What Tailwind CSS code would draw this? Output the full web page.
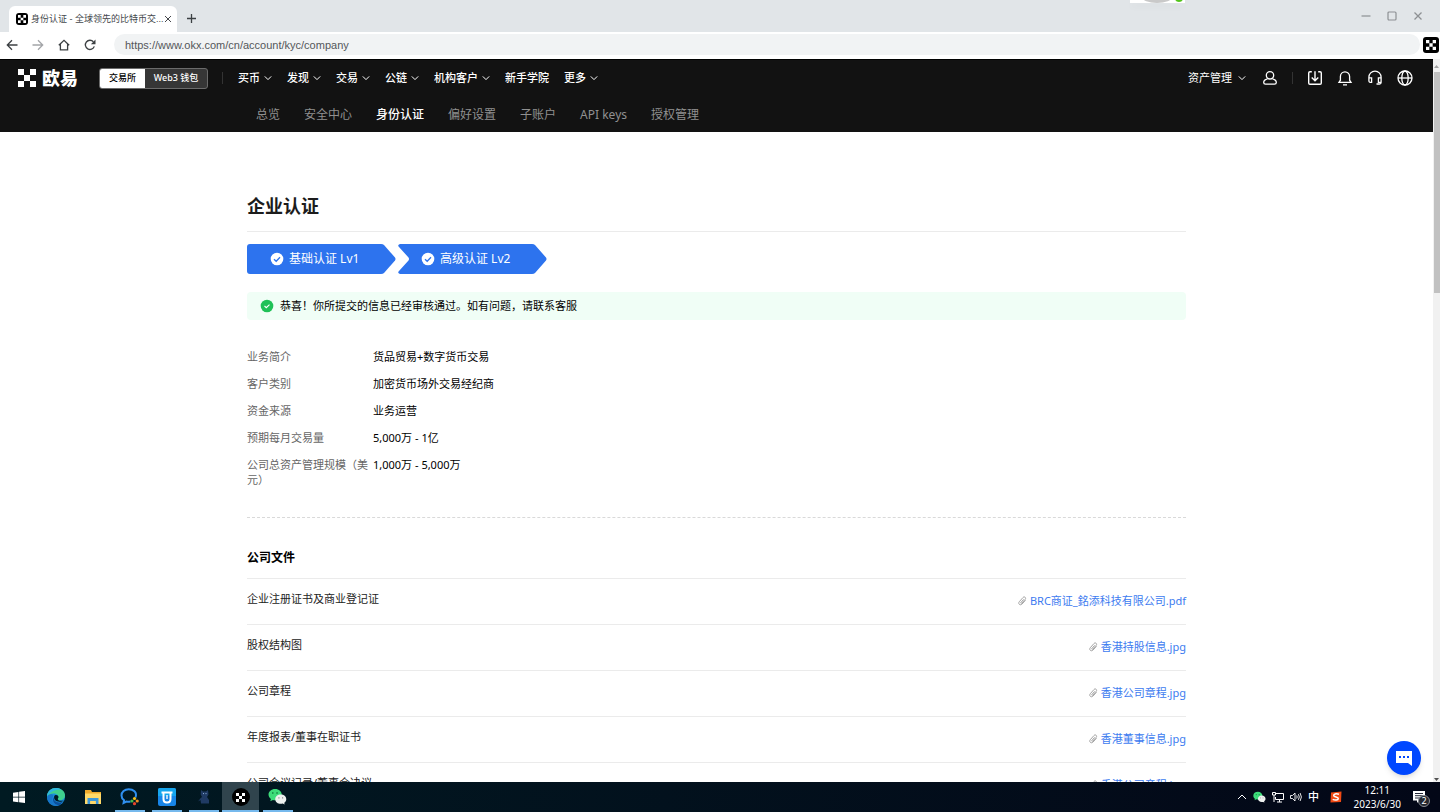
<!DOCTYPE html>
<html lang="zh-CN">

<head>
    <meta charset="UTF-8">
    <meta name="viewport" content="width=device-width, initial-scale=1.0">
    <title>身份认证 - 全球领先的比特币交易平台</title>
    <script src="https://cdn.jsdelivr.net/npm/@tailwindcss/browser@4"></script>
</head>

<body class="flex h-screen flex-col overflow-hidden bg-white font-['Noto_Sans','Noto_Sans_CJK_SC',sans-serif] text-[11px] leading-4 text-black">
    <!-- shared icons -->
    <svg class="hidden">
        <symbol id="okx" viewBox="0 0 15 15">
            <path d="M0 0h5v5H0zM10 0h5v5h-5zM5 5h5v5H5zM0 10h5v5H0zM10 10h5v5h-5z" fill="currentColor" />
        </symbol>
        <symbol id="chevron" viewBox="0 0 8 8">
            <path d="M.8 2.4 4 5.6l3.2-3.2" fill="none" stroke="currentColor" stroke-width="1" />
        </symbol>
        <symbol id="check" viewBox="0 0 14 14">
            <circle cx="7" cy="7" r="6.3" fill="currentColor" />
        </symbol>
        <symbol id="clip" viewBox="0 0 10 10">
            <path d="M6.6 3.4 3.9 6.500c-.5.6.4 1.300.9.700l3.400-3.900c1.300-1.600-.9-3.300-2.200-1.800L2.300 5.700C.6 7.800 3.300 10 5.100 8L8.500 4.200" fill="none" stroke="#999" stroke-width="0.9" />
        </symbol>
        <symbol id="wechat" viewBox="0 0 20 18">
            <path d="M7.500 1C3.400 1 .5 3.600.5 7c0 1.900 1 3.500 2.500 4.600L2.400 14l2.700-1.400c.8.200 1.600.400 2.400.400 4.100 0 7-2.700 7-6S11.600 1 7.500 1z" fill="#3ddc7a" />
            <path d="M13.500 6.800c-3.300 0-5.900 2.200-5.900 5s2.600 5 5.900 5c.7 0 1.400-.1 2-.3l2.100 1.100-.5-1.900c1.300-.9 2.200-2.300 2.200-3.900 0-2.800-2.500-5-5.800-5z" fill="#eef1ef" />
            <path d="M5 4.600v1.600M9.500 4.600v1.600" stroke="#0d7a3c" stroke-width="1.400" />
            <path d="M11.500 9.800v1.300M15.400 9.800v1.300" stroke="#888" stroke-width="1.200" />
        </symbol>
    </svg>

    <!-- tab strip -->
    <div class="relative flex h-8 shrink-0 items-end bg-[#e1e5e8] pl-[9px]">
        <div class="flex h-[26px] w-[168px] items-center rounded-t-md bg-white px-[7px] font-['Liberation_Sans','Noto_Sans_CJK_SC',sans-serif] text-[9px] text-[#45484c]">
            <span class="mr-[3px] flex size-3 shrink-0 items-center justify-center rounded-[3px] bg-black text-white"><svg class="size-2"><use href="#okx" /></svg></span>
            <span class="flex-1 whitespace-nowrap">身份认证 - 全球领先的比特币交...</span>
            <button class="shrink-0" aria-label="关闭标签页"><svg class="size-2" viewBox="0 0 8 8"><path d="M1 1l6 6M7 1 1 7" stroke="#45484c" /></svg></button>
        </div>
        <button class="mb-2 ml-[9px]" aria-label="新标签页"><svg class="size-[11px]" viewBox="0 0 11 11"><path d="M5.500 1v9M1 5.500h9" stroke="#3c4043" stroke-width="1.300" /></svg></button>
        <div class="ml-auto flex items-center gap-4 self-start pt-[11px] pr-[17px] text-[#8d9093]">
            <button aria-label="最小化"><svg class="size-[10px]" viewBox="0 0 10 10"><path d="M.5 5h9" stroke="currentColor" stroke-width="1.200" /></svg></button>
            <button aria-label="最大化"><svg class="size-[10px]" viewBox="0 0 10 10"><rect x="1" y="1" width="8" height="8" rx="1" fill="none" stroke="currentColor" stroke-width="1.200" /></svg></button>
            <button aria-label="关闭"><svg class="size-[10px]" viewBox="0 0 10 10"><path d="M1.500 1.500l7 7M8.500 1.500l-7 7" stroke="currentColor" stroke-width="1.300" /></svg></button>
        </div>
        <!-- floating widget peeking in from the top edge -->
        <div class="absolute top-0 left-[1130px] h-[3px] w-[55px] bg-white shadow-md">
            <svg class="block h-[3px] w-[55px]" viewBox="0 0 55 3"><ellipse cx="27" cy="-3" rx="15" ry="6" fill="#c9c9c9" /><circle cx="49" cy="-2" r="4" fill="#52c41a" /></svg>
        </div>
    </div>

    <!-- address bar -->
    <div class="flex h-[27px] shrink-0 items-center bg-white pr-px pb-[2px] pl-[6px]">
        <div class="flex gap-[14px] text-[#3c4043]">
            <button aria-label="后退"><svg class="size-3" viewBox="0 0 12 12"><path d="M11.500 6H1.500M6 1.300 1.300 6 6 10.700" fill="none" stroke="currentColor" stroke-width="1.300" /></svg></button>
            <button class="text-[#a3a5a8]" aria-label="前进"><svg class="size-3" viewBox="0 0 12 12"><path d="M.5 6h10M6 1.300 10.700 6 6 10.700" fill="none" stroke="currentColor" stroke-width="1.300" /></svg></button>
            <button aria-label="主页"><svg class="size-3" viewBox="0 0 12 12"><path d="M.8 6.200 6 1.300l5.200 4.900M2.400 5v5.900h7.200V5" fill="none" stroke="currentColor" stroke-width="1.300" /></svg></button>
            <button aria-label="重新加载"><svg class="size-3" viewBox="0 0 12 12"><path d="M10.300 7.400A4.600 4.600 0 1 1 9.400 2.800" fill="none" stroke="currentColor" stroke-width="1.300" /><path d="M11.500.6v4.600H6.900z" fill="currentColor" /></svg></button>
        </div>
        <input class="ml-[18px] h-[21px] flex-1 rounded-full bg-[#f1f3f4] pl-[11px] font-['Liberation_Sans',sans-serif] text-[11px] text-[#54575a]" type="text" aria-label="地址" value="https://www.okx.com/cn/account/kyc/company">
        <button class="ml-[3px] flex size-4 items-center justify-center rounded-[3px] bg-black text-white" aria-label="欧易扩展"><svg class="size-[10px]"><use href="#okx" /></svg></button>
    </div>

    <div class="relative flex min-h-0 flex-1">
        <div class="min-w-0 flex-1 overflow-hidden">
            <header class="border-t border-black bg-[#121212] text-white">
                <div class="flex h-9 items-center pl-[18px] font-medium">
                    <a class="flex items-center gap-[6px] text-lg leading-5 font-black" href="#"><svg class="size-[18px]"><use href="#okx" /></svg>欧易</a>
                    <div class="ml-[21px] flex h-[21px] overflow-hidden rounded-[3px] border border-[#6b6b6b] bg-[#363636] text-[9px]">
                        <button class="w-[45px] bg-white text-black">交易所</button>
                        <button class="w-[62px]">Web3 钱包</button>
                    </div>
                    <span class="ml-[14px] h-3 w-px bg-[#333]"></span>
                    <nav class="ml-[15px] flex gap-[15px]">
                        <a class="flex items-center gap-1" href="#">买币<svg class="size-2"><use href="#chevron" /></svg></a>
                        <a class="flex items-center gap-1" href="#">发现<svg class="size-2"><use href="#chevron" /></svg></a>
                        <a class="flex items-center gap-1" href="#">交易<svg class="size-2"><use href="#chevron" /></svg></a>
                        <a class="flex items-center gap-1" href="#">公链<svg class="size-2"><use href="#chevron" /></svg></a>
                        <a class="flex items-center gap-1" href="#">机构客户<svg class="size-2"><use href="#chevron" /></svg></a>
                        <a href="#">新手学院</a>
                        <a class="flex items-center gap-1" href="#">更多<svg class="size-2"><use href="#chevron" /></svg></a>
                    </nav>
                    <div class="ml-auto flex items-center gap-[14px] pr-5">
                        <a class="mr-[2px] flex items-center gap-[6px] font-normal" href="#">资产管理<svg class="size-2"><use href="#chevron" /></svg></a>
                        <a href="#" aria-label="用户"><svg class="size-4" viewBox="0 0 16 16" fill="none" stroke="currentColor" stroke-width="1.300"><circle cx="8" cy="5.300" r="3.700" /><path d="M5.500 8.900C3 9.500 1.700 10.700 1.700 12.500c0 1.100.7 1.700 1.800 1.700h9c1.100 0 1.800-.6 1.800-1.700 0-1.800-1.300-3-3.800-3.600" /></svg></a>
                        <span class="h-3 w-px bg-[#333]"></span>
                        <a href="#" aria-label="下载"><svg class="size-4" viewBox="0 0 16 16" fill="none" stroke="currentColor" stroke-width="1.400"><path d="M4.800 1.700H3Q1.700 1.700 1.700 3v10q0 1.300 1.300 1.300h10q1.300 0 1.300-1.300V3q0-1.300-1.300-1.300h-1.800M8 1.200v9.300M4.700 7.400 8 10.700l3.300-3.300" /></svg></a>
                        <a href="#" aria-label="通知"><svg class="size-4" viewBox="0 0 16 16" fill="none" stroke="currentColor" stroke-width="1.300"><path d="M2 12.400h12l-1.400-2.200V6.400a4.600 4.600 0 0 0-9.200 0v3.800zM6 14.800h4" /></svg></a>
                        <a href="#" aria-label="客服"><svg class="size-4" viewBox="0 0 16 16" fill="none" stroke="currentColor" stroke-width="1.300"><path d="M1.900 10.500V7.200a6.100 6.100 0 0 1 12.200 0v5.300c0 1-.6 1.500-1.600 1.500H9.500M2 7.800h2.600v4.500H3.300c-.9 0-1.400-.6-1.400-1.800M14 7.800h-2.600v4.500H14" /></svg></a>
                        <a href="#" aria-label="语言"><svg class="size-4" viewBox="0 0 16 16" fill="none" stroke="currentColor" stroke-width="1.300"><circle cx="8" cy="8" r="7" /><ellipse cx="8" cy="8" rx="3.200" ry="7" /><path d="M1 8h14" /></svg></a>
                    </div>
                </div>
                <nav class="flex h-9 items-center gap-6 pt-[2px] pl-64 text-xs text-[#909090]">
                    <a href="#">总览</a>
                    <a href="#">安全中心</a>
                    <a class="font-medium text-white" href="#">身份认证</a>
                    <a href="#">偏好设置</a>
                    <a href="#">子账户</a>
                    <a href="#">API keys</a>
                    <a href="#">授权管理</a>
                </nav>
            </header>

            <main class="mx-auto max-w-[939px] pt-[61px]">
                <h1 class="border-b border-[#ebebeb] pb-3 text-lg leading-[26px] font-bold text-[#1c1c1c]">企业认证</h1>

                <ol class="mt-3 flex gap-[2px] text-xs text-white">
                    <li class="relative flex h-[30px] w-[149px] items-center pl-[23px]">
                        <svg class="absolute inset-0 size-full" viewBox="0 0 149 30"><path d="M3 0h131q2 0 3 1l11 12.500q1 1.500 0 3L137 29q-1 1-3 1H3q-3 0-3-3V3q0-3 3-3z" fill="#2d73ee" /></svg>
                        <svg class="relative mr-[5px] size-[14px]" viewBox="0 0 14 14"><use href="#check" /><path d="M4 7.200 6.200 9.300 10 5.300" fill="none" stroke="#2d73ee" stroke-width="1.300" /></svg>
                        <span class="relative">基础认证 Lv1</span>
                    </li>
                    <li class="relative flex h-[30px] w-[149px] items-center pl-[23px]">
                        <svg class="absolute inset-0 size-full" viewBox="0 0 149 30"><path d="M2 0h132q2 0 3 1l11 12.500q1 1.500 0 3L137 29q-1 1-3 1H2q-3-1-1-3l9.500-10.500q1-1.500 0-3L1 3q-2-2 1-3z" fill="#2d73ee" /></svg>
                        <svg class="relative mr-[5px] size-[14px]" viewBox="0 0 14 14"><use href="#check" /><path d="M4 7.200 6.200 9.300 10 5.300" fill="none" stroke="#2d73ee" stroke-width="1.300" /></svg>
                        <span class="relative">高级认证 Lv2</span>
                    </li>
                </ol>

                <p class="mt-[18px] flex h-7 items-center gap-[6px] rounded bg-[#f0fef6] pl-[13px]">
                    <svg class="size-[14px] text-[#1fc157]" viewBox="0 0 14 14"><use href="#check" /><path d="M4.500 7 6.300 8.700 9.500 5.600" fill="none" stroke="#fff" stroke-width="1.100" /></svg>
                    恭喜！你所提交的信息已经审核通过。如有问题，请联系客服
                </p>

                <dl class="mt-[29px] grid grid-cols-[126px_1fr] gap-y-3 leading-[15px]">
                    <dt class="text-[#666]">业务简介</dt>
                    <dd>货品贸易+数字货币交易</dd>
                    <dt class="text-[#666]">客户类别</dt>
                    <dd>加密货币场外交易经纪商</dd>
                    <dt class="text-[#666]">资金来源</dt>
                    <dd>业务运营</dd>
                    <dt class="text-[#666]">预期每月交易量</dt>
                    <dd>5,000万 - 1亿</dd>
                    <dt class="text-[#666]">公司总资产管理规模（美元）</dt>
                    <dd>1,000万 - 5,000万</dd>
                </dl>

                <h2 class="mt-[30px] border-t border-dashed border-[#d9d9d9] pt-[31px] pb-[11px] text-xs leading-[18px] font-bold">公司文件</h2>
                <ul class="text-[#222]">
                    <li class="flex h-[46px] justify-between border-t border-[#ebebeb] pt-3">
                        <span>企业注册证书及商业登记证</span>
                        <a class="mt-[2px] flex items-center gap-[3px] self-start text-[#3d7bf0]" href="#"><svg class="size-[10px]"><use href="#clip" /></svg>BRC商证_銘添科技有限公司.pdf</a>
                    </li>
                    <li class="flex h-[46px] justify-between border-t border-[#ebebeb] pt-3">
                        <span>股权结构图</span>
                        <a class="mt-[2px] flex items-center gap-[3px] self-start text-[#3d7bf0]" href="#"><svg class="size-[10px]"><use href="#clip" /></svg>香港持股信息.jpg</a>
                    </li>
                    <li class="flex h-[46px] justify-between border-t border-[#ebebeb] pt-3">
                        <span>公司章程</span>
                        <a class="mt-[2px] flex items-center gap-[3px] self-start text-[#3d7bf0]" href="#"><svg class="size-[10px]"><use href="#clip" /></svg>香港公司章程.jpg</a>
                    </li>
                    <li class="flex h-[46px] justify-between border-t border-[#ebebeb] pt-3">
                        <span>年度报表/董事在职证书</span>
                        <a class="mt-[2px] flex items-center gap-[3px] self-start text-[#3d7bf0]" href="#"><svg class="size-[10px]"><use href="#clip" /></svg>香港董事信息.jpg</a>
                    </li>
                    <li class="flex h-[46px] justify-between border-t border-[#ebebeb] pt-3">
                        <span>公司会议记录/董事会决议</span>
                        <a class="mt-[2px] flex items-center gap-[3px] self-start text-[#3d7bf0]" href="#"><svg class="size-[10px]"><use href="#clip" /></svg>香港公司章程.jpg</a>
                    </li>
                </ul>
            </main>
        </div>

        <!-- scrollbar -->
        <div class="flex w-[7px] shrink-0 flex-col items-center bg-[#f1f1f1]">
            <svg class="h-[13px] w-[7px]" viewBox="0 0 7 13"><path d="M1 9 3.500 6 6 9z" fill="#a3a3a3" /></svg>
            <div class="h-[221px] w-[6px] bg-[#c1c1c1]"></div>
            <svg class="mt-auto h-[6px] w-[7px]" viewBox="0 0 7 6"><path d="M1 2h5L3.500 5z" fill="#505050" /></svg>
        </div>

        <button class="absolute right-[19px] bottom-[7px] flex size-[34px] items-center justify-center rounded-full bg-[#0047ff] shadow-md" aria-label="在线客服">
            <svg class="size-4" viewBox="0 0 16 16"><path d="M0 1h16v15l-4-3H0z" fill="#fff" /><path d="M3 6h2v2H3zM7 6h2v2H7zM11 6h2v2h-2z" fill="#0047ff" /></svg>
        </button>
    </div>

    <!-- taskbar -->
    <footer class="flex h-[30px] shrink-0 items-stretch bg-linear-to-r from-[#001a22] to-[#030717] text-white">
        <button class="flex w-[37px] items-center justify-center" aria-label="开始"><svg class="size-3" viewBox="0 0 12 12"><path d="M0 1.700 5.400.9v4.800H0zM6.100.8 12 0v5.700H6.100zM0 6.400h5.400v4.800L0 10.400zM6.100 6.400H12V12l-5.900-.8z" fill="#fff" /></svg></button>
        <button class="flex w-[37px] items-center justify-center" aria-label="Edge"><svg class="size-5" viewBox="0 0 20 20">
            <circle cx="10" cy="10" r="9" fill="#1b8fdc" />
            <path d="M1 10C1 4 5.500 1 10 1c6 0 9 4 9 7.500 0 3-2.500 4.700-5 4.700-2 0-3-.9-2.300-1.900C13.200 9 11 6.500 7.800 6.500 4 6.500 1.500 8.500 1 10z" fill="#3fcf8e" />
            <path d="M1 10C1 4 5.500 1 10 1c2.500 0 4 .6 5.500 1.800C10 2 4 4 1 10z" fill="#2fb5e0" />
            <path d="M7.500 8.500C4.500 13 8 18 13 18.400c-1 .5-2 .6-3 .6-5 0-9-4-9-9 1-3 5-3.500 6.500-1.500z" fill="#1676c9" />
            <path d="M8 10c-.8 4 3 6.500 8.600 5C15 17.500 13.500 18.300 12.500 18.300 8 17.500 5.500 13.500 8 10z" fill="#0c4f9c" />
            <path d="M8.300 9c-1 3 1.300 5.700 5.200 5.700 2 0 3.500-.5 4.300-1.300-2.500.8-6 .5-6-1.500 0-.7.700-1 .7-2C12.500 8 9.300 7 8.300 9z" fill="#001a22" />
        </svg></button>
        <button class="flex w-[37px] items-center justify-center" aria-label="文件资源管理器"><svg class="size-4" viewBox="0 0 16 16"><path d="M0 1h6l1 2h9v12H0z" fill="#eea92b" /><path d="M0 4.500h16V15H0z" fill="#ffd968" /><path d="M2.500 9h11v6h-2.600v-3H5.100v3H2.500z" fill="#3c97d9" /></svg></button>
        <button class="flex w-[37px] flex-col items-center justify-between pt-[6px]" aria-label="企业微信"><svg class="h-[18px] w-5" viewBox="0 0 20 18">
            <path d="M15.500 9.500C17.500 4 13 1.200 8.700 1.200 4.500 1.200 1.500 4 1.500 7.400c0 2 1 3.700 2.600 4.900l-.5 2.700 2.800-1.500c1.400.3 2.700.3 4 0" fill="none" stroke="#2f8fef" stroke-width="2" />
            <circle cx="14.500" cy="10.500" r="1.600" fill="#f5c21b" /><circle cx="17.200" cy="13" r="1.600" fill="#f08a24" /><circle cx="14.500" cy="15.700" r="1.600" fill="#e8452c" /><circle cx="11.900" cy="13" r="1.600" fill="#43b649" />
        </svg><span class="h-[2px] w-[30px] bg-[#76b9ed]"></span></button>
        <button class="flex w-[37px] flex-col items-center justify-between pt-[6px]" aria-label="优云"><svg class="size-[18px]" viewBox="0 0 18 18">
            <rect width="18" height="18" rx="2" fill="#1785e8" /><path d="M0 2a2 2 0 0 1 2-2h14a2 2 0 0 1 2 2v6H0z" fill="#16a6ee" />
            <path d="M5.500 5v6q0 3.500 3.500 3.500t3.500-3.500V5M3.500 4.500h11" fill="none" stroke="#fff" stroke-width="2" /><path d="M9 7v4" stroke="#fff" stroke-width="1.400" />
        </svg><span class="h-[2px] w-[30px] bg-[#76b9ed]"></span></button>
        <button class="flex w-[37px] flex-col items-center justify-between pt-[8px]" aria-label="猫"><svg class="h-[14px] w-3" viewBox="0 0 12 14">
            <path d="M3 0l2 1.500h3L10 0l.5 4.500L9 7l2 3v3.500H3L2.500 10 0 11.500 2.700 8 4 7 2.700 4.500z" fill="#1f3a63" /><path d="M5 3.600h1M7.500 3.600h1" stroke="#8fb3dc" />
        </svg><span class="h-[2px] w-[30px] bg-[#76b9ed]"></span></button>
        <button class="flex w-[37px] flex-col items-center justify-between bg-[#30444d] pt-[6px]" aria-label="欧易"><span class="flex size-[18px] items-center justify-center rounded-full bg-black"><svg class="size-[9px]"><use href="#okx" /></svg></span><span class="h-[2px] w-full bg-[#76b9ed]"></span></button>
        <button class="flex w-[37px] flex-col items-center justify-between pt-[6px]" aria-label="微信"><svg class="h-[17px] w-[19px]"><use href="#wechat" /></svg><span class="h-[2px] w-[30px] bg-[#76b9ed]"></span></button>

        <div class="ml-auto flex items-center gap-[6px] pr-[7px]">
            <button aria-label="显示隐藏的图标"><svg class="w-[10px]" viewBox="0 0 10 10"><path d="M1 7l4-4 4 4" fill="none" stroke="#fff" /></svg></button>
            <svg class="h-3 w-[13px]"><use href="#wechat" /></svg>
            <svg class="size-3" viewBox="0 0 12 12" fill="none" stroke="#fff"><path d="M4 2.500h7.500v6H3.500V6M7.500 8.500v2.500M5 11h5M.5 1.500h3v2.500h-3zM2 4v7" /></svg>
            <svg class="size-3" viewBox="0 0 12 12" fill="none" stroke="#fff" stroke-width="0.900"><path d="M.5 4.500h2L5 2v8L2.500 7.500h-2zM6.700 4.500q1 1.500 0 3M8.400 3.200q1.800 2.800 0 5.600M10.100 2q2.600 4 0 8" /></svg>
            <span class="w-3 text-center font-medium">中</span>
            <svg class="mx-1 size-3" viewBox="0 0 12 12"><path d="M1 1.500 11.500.5 11 11 .5 11.500z" fill="#f04a14" /><path d="M9 3.200C6 2.200 3.500 3 3.700 4.600 4 6.300 8.500 5.700 8.300 7.600 8.100 9.200 5 9.500 2.700 8.300" fill="none" stroke="#fff" stroke-width="1.500" /></svg>
            <div class="mx-[2px] text-center text-[10px] leading-[14px]">12:11<br>2023/6/30</div>
            <button class="relative ml-1 w-5" aria-label="通知中心"><svg class="h-[13px] w-3" viewBox="0 0 12 13"><path d="M0 0h12v9.500H6L4 12V9.500H0z" fill="#fff" /><path d="M2 2.500h8M2 4.700h8M2 7h5" stroke="#0a1020" stroke-width="0.900" /></svg>
                <span class="absolute top-[4px] left-[5px] size-3 rounded-full border border-[#8a8d94] bg-[#24272f] text-[9px] leading-[10px]">2</span></button>
        </div>
    </footer>
</body>

</html>
